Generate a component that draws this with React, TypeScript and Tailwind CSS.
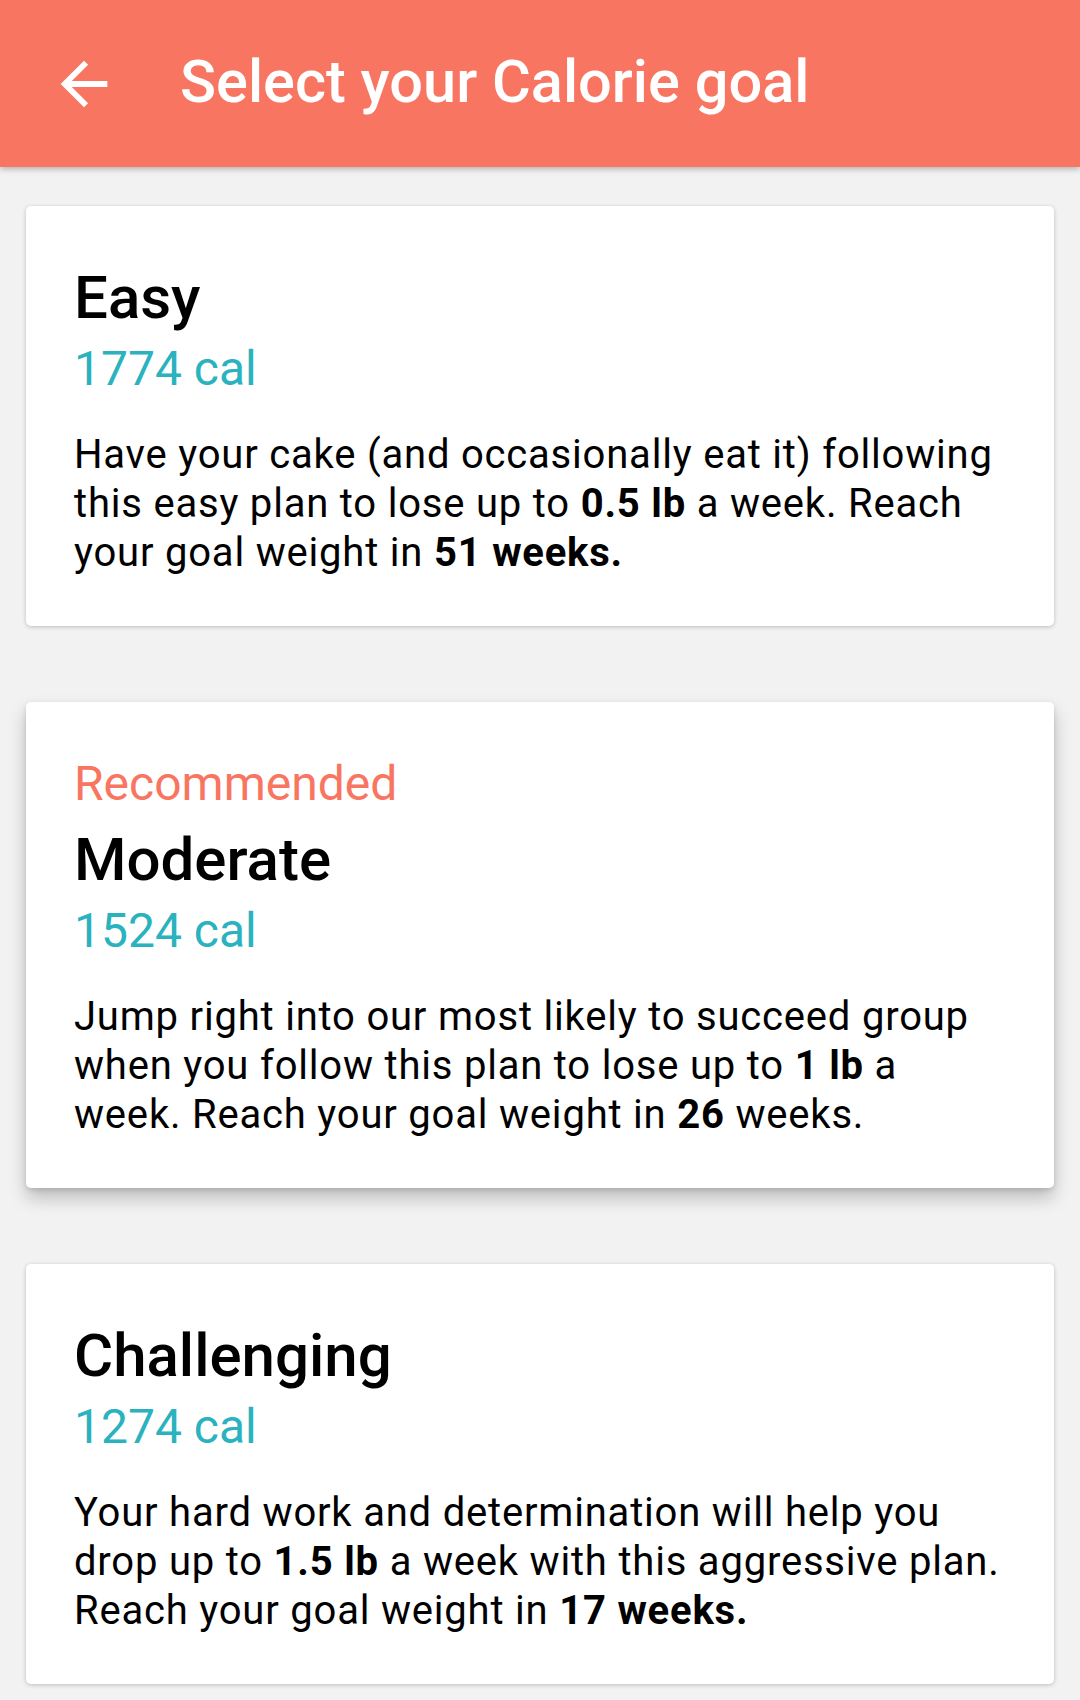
import React from "react";

const font = { fontFamily: "Roboto, 'Noto Sans', 'Liberation Sans', sans-serif" };

function Card({
  recommended,
  title,
  cal,
  lines,
  elevated,
}: {
  recommended?: boolean;
  title: string;
  cal: string;
  lines: React.ReactNode[];
  elevated?: boolean;
}) {
  return (
    <div
      className={
        "bg-white rounded-[5px] pl-[48px] pr-[20px] pt-[57px] pb-[49px] " +
        (elevated
          ? "shadow-[0_10px_18px_rgba(0,0,0,0.22),0_2px_5px_rgba(0,0,0,0.12)]"
          : "shadow-[0_1px_4px_rgba(0,0,0,0.22)]")
      }
    >
      {recommended && (
        <div className="text-[48px] leading-[50px] text-[#f87562] mb-[16px]">Recommended</div>
      )}
      <div className="text-[60px] leading-[70px] font-medium text-black">{title}</div>
      <div className="text-[48px] leading-[60px] text-[#2ab2be] mt-[6px]">{cal}</div>
      <div className="text-[40px] leading-[49px] tracking-[0.8px] text-black mt-[31px] whitespace-nowrap">
        {lines.map((l, i) => (
          <div key={i}>{l}</div>
        ))}
      </div>
    </div>
  );
}

export default function App() {
  return (
    <div className="w-[1080px] h-[1700px] bg-[#f2f2f2] overflow-hidden" style={font}>
      <div className="relative z-10 h-[167px] bg-[#f87562] flex items-center shadow-[0_2px_6px_rgba(0,0,0,0.28)]">
        <svg className="ml-[49px] w-[70px] h-[70px]" viewBox="0 0 24 24" fill="#ffffff">
          <path d="M20 11H7.83l5.59-5.59L12 4l-8 8 8 8 1.41-1.41L7.83 13H20v-2z" />
        </svg>
        <div className="ml-[61px] text-[59.5px] font-medium text-white leading-none pb-[2px]">
          Select your Calorie goal
        </div>
      </div>
      <div className="flex flex-col gap-[76px] px-[26px] pt-[39px]">
        <Card
          title="Easy"
          cal="1774 cal"
          lines={[
            "Have your cake (and occasionally eat it) following",
            <>
              this easy plan to lose up to <b className="font-bold">0.5 lb</b> a week. Reach
            </>,
            <>
              your goal weight in <b className="font-bold">51 weeks.</b>
            </>,
          ]}
        />
        <Card
          recommended
          elevated
          title="Moderate"
          cal="1524 cal"
          lines={[
            "Jump right into our most likely to succeed group",
            <>
              when you follow this plan to lose up to <b className="font-bold">1 lb</b> a
            </>,
            <>
              week. Reach your goal weight in <b className="font-bold">26</b> weeks.
            </>,
          ]}
        />
        <Card
          title="Challenging"
          cal="1274 cal"
          lines={[
            "Your hard work and determination will help you",
            <>
              drop up to <b className="font-bold">1.5 lb</b> a week with this aggressive plan.
            </>,
            <>
              Reach your goal weight in <b className="font-bold">17 weeks.</b>
            </>,
          ]}
        />
      </div>
    </div>
  );
}
